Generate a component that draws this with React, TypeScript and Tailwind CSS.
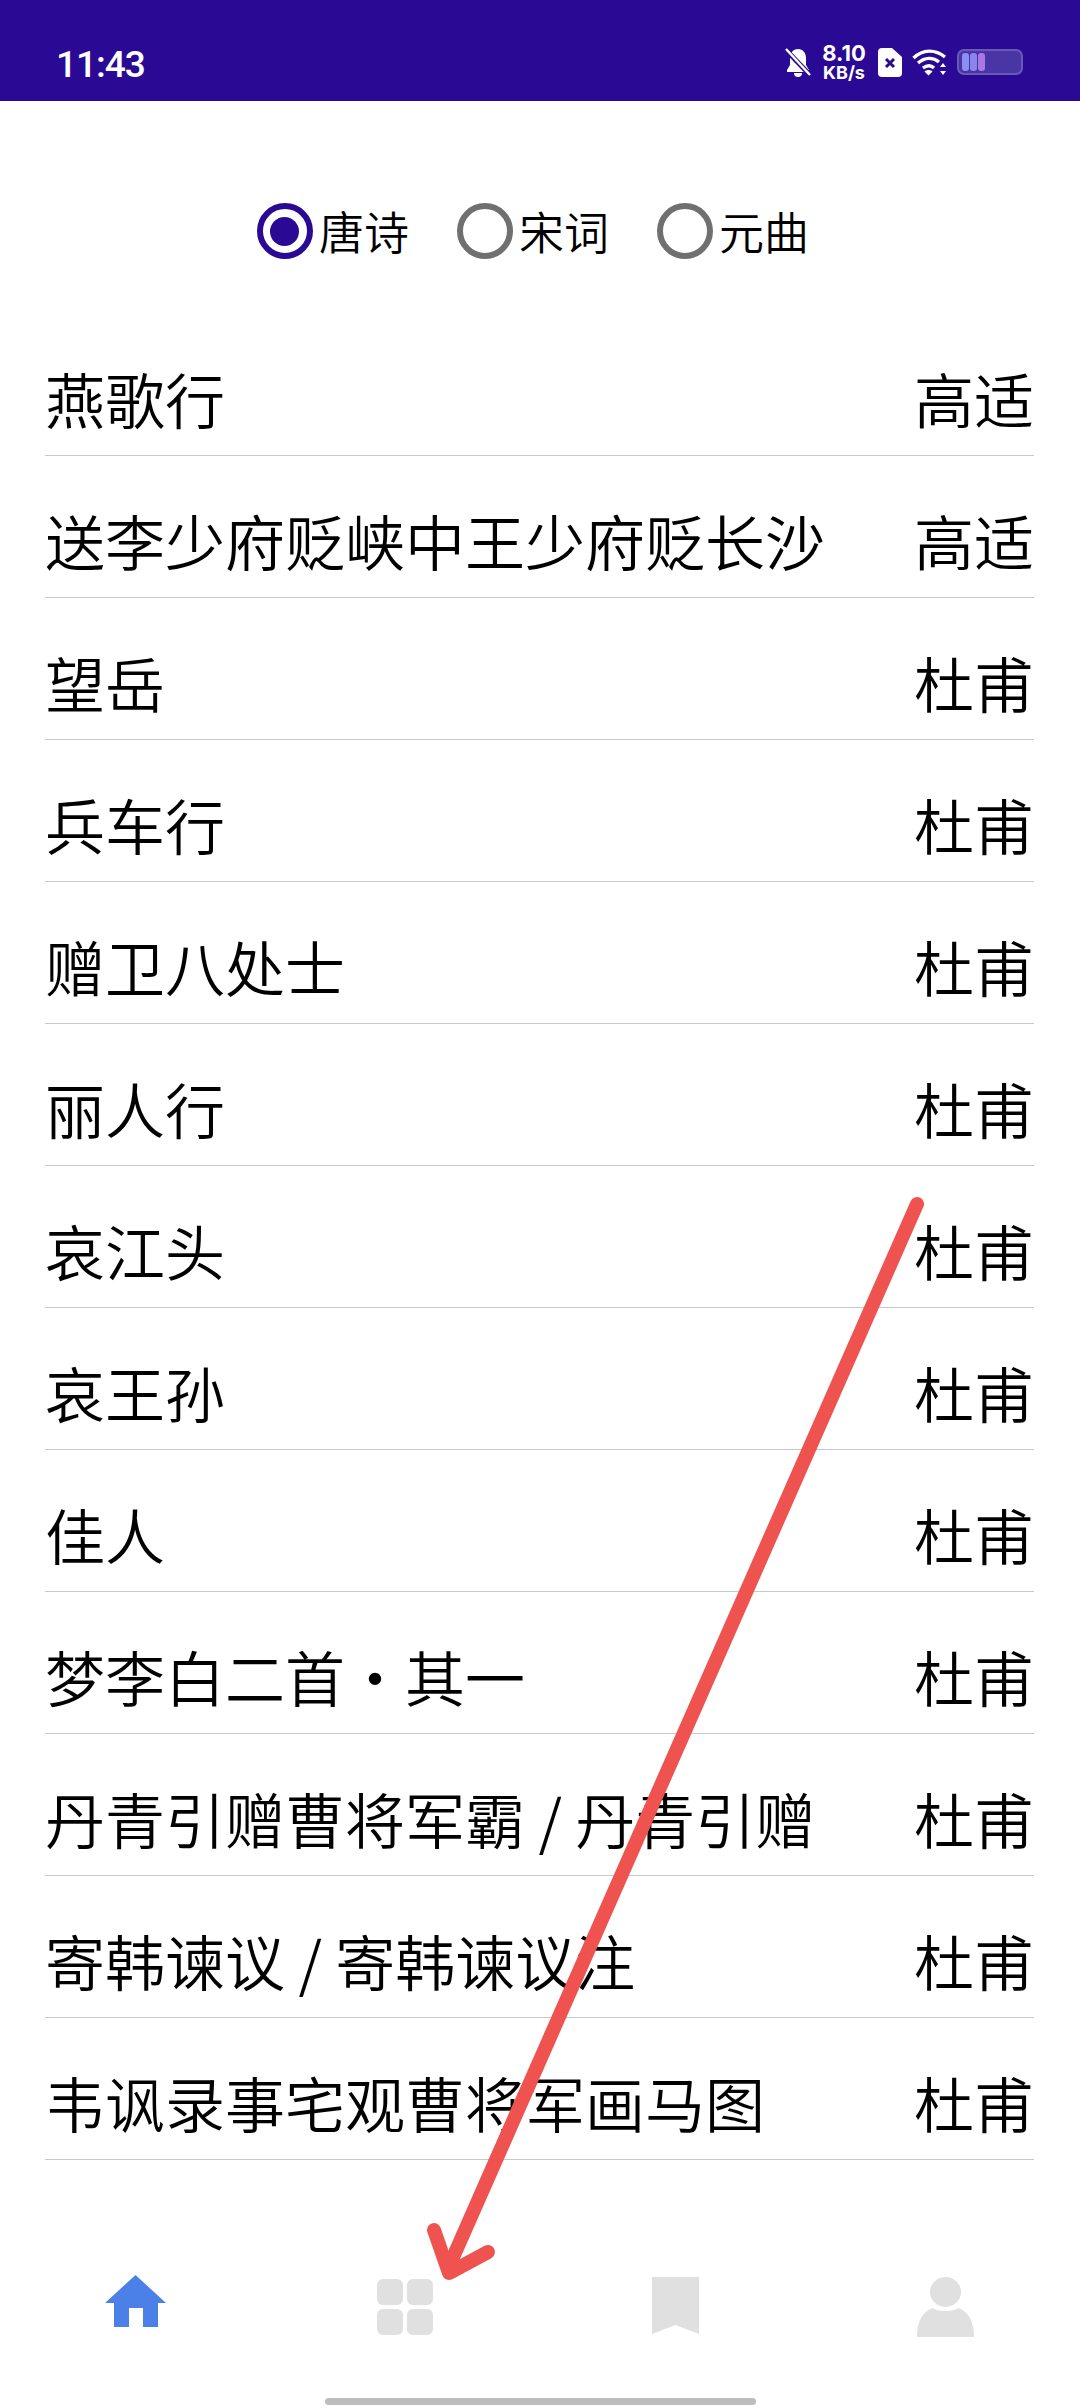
const rows: [string, string][] = [
  ["燕歌行", "高适"],
  ["送李少府贬峡中王少府贬长沙", "高适"],
  ["望岳", "杜甫"],
  ["兵车行", "杜甫"],
  ["赠卫八处士", "杜甫"],
  ["丽人行", "杜甫"],
  ["哀江头", "杜甫"],
  ["哀王孙", "杜甫"],
  ["佳人", "杜甫"],
  ["梦李白二首・其一", "杜甫"],
  ["丹青引赠曹将军霸 / 丹青引赠", "杜甫"],
  ["寄韩谏议 / 寄韩谏议注", "杜甫"],
  ["韦讽录事宅观曹将军画马图", "杜甫"],
];

function Radio({ label, checked }: { label: string; checked?: boolean }) {
  return (
    <div className="flex items-center gap-[6px]">
      <div
        className={
          checked
            ? "w-[56px] h-[56px] rounded-full border-[6px] border-[#2a0a94] flex items-center justify-center"
            : "w-[56px] h-[56px] rounded-full border-[6px] border-[#707070]"
        }
      >
        {checked && <div className="w-[29px] h-[29px] rounded-full bg-[#2a0a94]" />}
      </div>
      <span className="text-[45px] leading-[56px] text-black font-[350]">{label}</span>
    </div>
  );
}

export default function App() {
  return (
    <div
      className="relative w-[1080px] h-[2408px] bg-white overflow-hidden flex flex-col"
      style={{ fontFamily: '"Noto Sans CJK SC", "Noto Sans", sans-serif' }}
    >
      {/* status bar */}
      <div className="h-[101px] bg-[#2a0a94] flex items-end pb-[21px] pl-[56px] pr-[57px] text-white shrink-0">
        <span className="text-[37px] leading-[30px] font-medium tracking-[-1px]" style={{ fontFamily: "Roboto, sans-serif" }}>
          11:43
        </span>
        <div className="ml-auto flex items-center h-[36px]">
          <svg width="26" height="30" viewBox="0 0 26 30" className="mr-[11px]">
            <path d="M13 2c-5 0-8 4-8 9v7l-3 5v2h22v-2l-3-5v-7c0-5-3-9-8-9z" fill="#fff" />
            <path d="M9 26h8a4 4 0 0 1-8 0z" fill="#fff" />
            <path d="M1 3l24 25" stroke="#2a0a94" strokeWidth="5" />
            <path d="M1 2l24 26" stroke="#fff" strokeWidth="2.4" />
          </svg>
          <div className="flex flex-col items-center w-[44px] font-bold mr-[12px]" style={{ fontFamily: "Inter, sans-serif" }}>
            <span className="text-[22px] leading-[21px]">8.10</span>
            <span className="text-[18px] leading-[18px]">KB/s</span>
          </div>
          <svg width="24" height="29" viewBox="0 0 24 29" className="mr-[10px]">
            <path d="M4 0h10l10 9v16a4 4 0 0 1-4 4H4a4 4 0 0 1-4-4V4a4 4 0 0 1 4-4z" fill="#fff" />
            <path d="M8 11l8 8M16 11l-8 8" stroke="#2a0a94" strokeWidth="3" />
          </svg>
          <svg width="36" height="27" viewBox="0 0 36 27" className="mr-[9px]" fill="none" stroke="#fff" strokeWidth="3.4">
            <path d="M1.5 9C11 0 23 0 33 8" />
            <path d="M6 14c7-6 15-6 21-1" />
            <path d="M11 19c4-3 8-3 11 0" />
            <path d="M12.5 22.5l4 4 4-4c-2-2-6-2-8 0z" fill="#fff" stroke="none" />
            <path d="M31 14l3 4h-6zM31 26l-3-4h6z" fill="#fff" stroke="none" />
          </svg>
          <div className="w-[66px] h-[26px] rounded-[7px] bg-[#4a35a5] border-[2px] border-[#6a5ab5] flex items-center gap-[1px] pl-[3px]">
            <div className="w-[7px] h-[18px] rounded-[3px] bg-[#8a90f2]" />
            <div className="w-[7px] h-[18px] rounded-[3px] bg-[#8a84ee]" />
            <div className="w-[7px] h-[18px] rounded-[3px] bg-[#a878e6]" />
          </div>
        </div>
      </div>

      {/* radio group */}
      <div className="h-[213px] shrink-0 flex items-start justify-center gap-[48px] pt-[102px] pr-[14px]">
        <Radio label="唐诗" checked />
        <Radio label="宋词" />
        <Radio label="元曲" />
      </div>

      {/* list */}
      <div className="pl-[45px] pr-[46px] shrink-0">
        {rows.map(([title, author], i) => (
          <div
            key={i}
            className="h-[142px] pt-[26px] border-b-[1.5px] border-[#c8c8c8] flex items-center justify-between text-[60px] text-black font-[350]"
          >
            <span className="leading-[80px]">{title}</span>
            <span className="leading-[80px]">{author}</span>
          </div>
        ))}
      </div>

      {/* bottom nav */}
      <div className="mt-[114px] grid grid-cols-4 h-[64px] shrink-0">
        <div className="flex justify-center items-start">
          <svg width="61" height="52" viewBox="0 0 61 52" className="mt-[1px]">
            <path d="M30.5 0L61 28H53V52H38V33H24V52H9V28H0z" fill="#4a80e8" />
          </svg>
        </div>
        <div className="flex justify-center items-start">
          <div className="grid grid-cols-2 gap-[4px] w-[56px] h-[56px] mt-[5px]">
            <div className="rounded-[6px] bg-[#e0e0e0]" />
            <div className="rounded-[6px] bg-[#e0e0e0]" />
            <div className="rounded-[6px] bg-[#e0e0e0]" />
            <div className="rounded-[6px] bg-[#e0e0e0]" />
          </div>
        </div>
        <div className="flex justify-center items-start">
          <svg width="47" height="57" viewBox="0 0 47 57" className="mt-[3px]">
            <path d="M0 0H47V57L23.5 48 0 57z" fill="#e0e0e0" />
          </svg>
        </div>
        <div className="flex justify-center items-start">
          <svg width="57" height="60" viewBox="0 0 57 60" className="mt-[3px]">
            <ellipse cx="28.5" cy="15" rx="15.5" ry="15" fill="#e0e0e0" />
            <path d="M0 60C0 44 6 34 16 31c4 4 21 4 25 0 10 3 16 13 16 29z" fill="#e0e0e0" />
          </svg>
        </div>
      </div>

      {/* gesture bar */}
      <div className="mt-[60px] mx-auto w-[431px] h-[7px] rounded-full bg-[#bdbdbd] shrink-0" />

      {/* annotation arrow */}
      <svg width="1080" height="2408" viewBox="0 0 1080 2408" className="absolute left-0 top-0 pointer-events-none">
        <path d="M917 1204L451 2262" stroke="#ef5350" strokeWidth="14" strokeLinecap="round" fill="none" />
        <path d="M434 2230L449 2273L488 2252" stroke="#ef5350" strokeWidth="14" strokeLinecap="round" strokeLinejoin="round" fill="none" />
      </svg>
    </div>
  );
}
